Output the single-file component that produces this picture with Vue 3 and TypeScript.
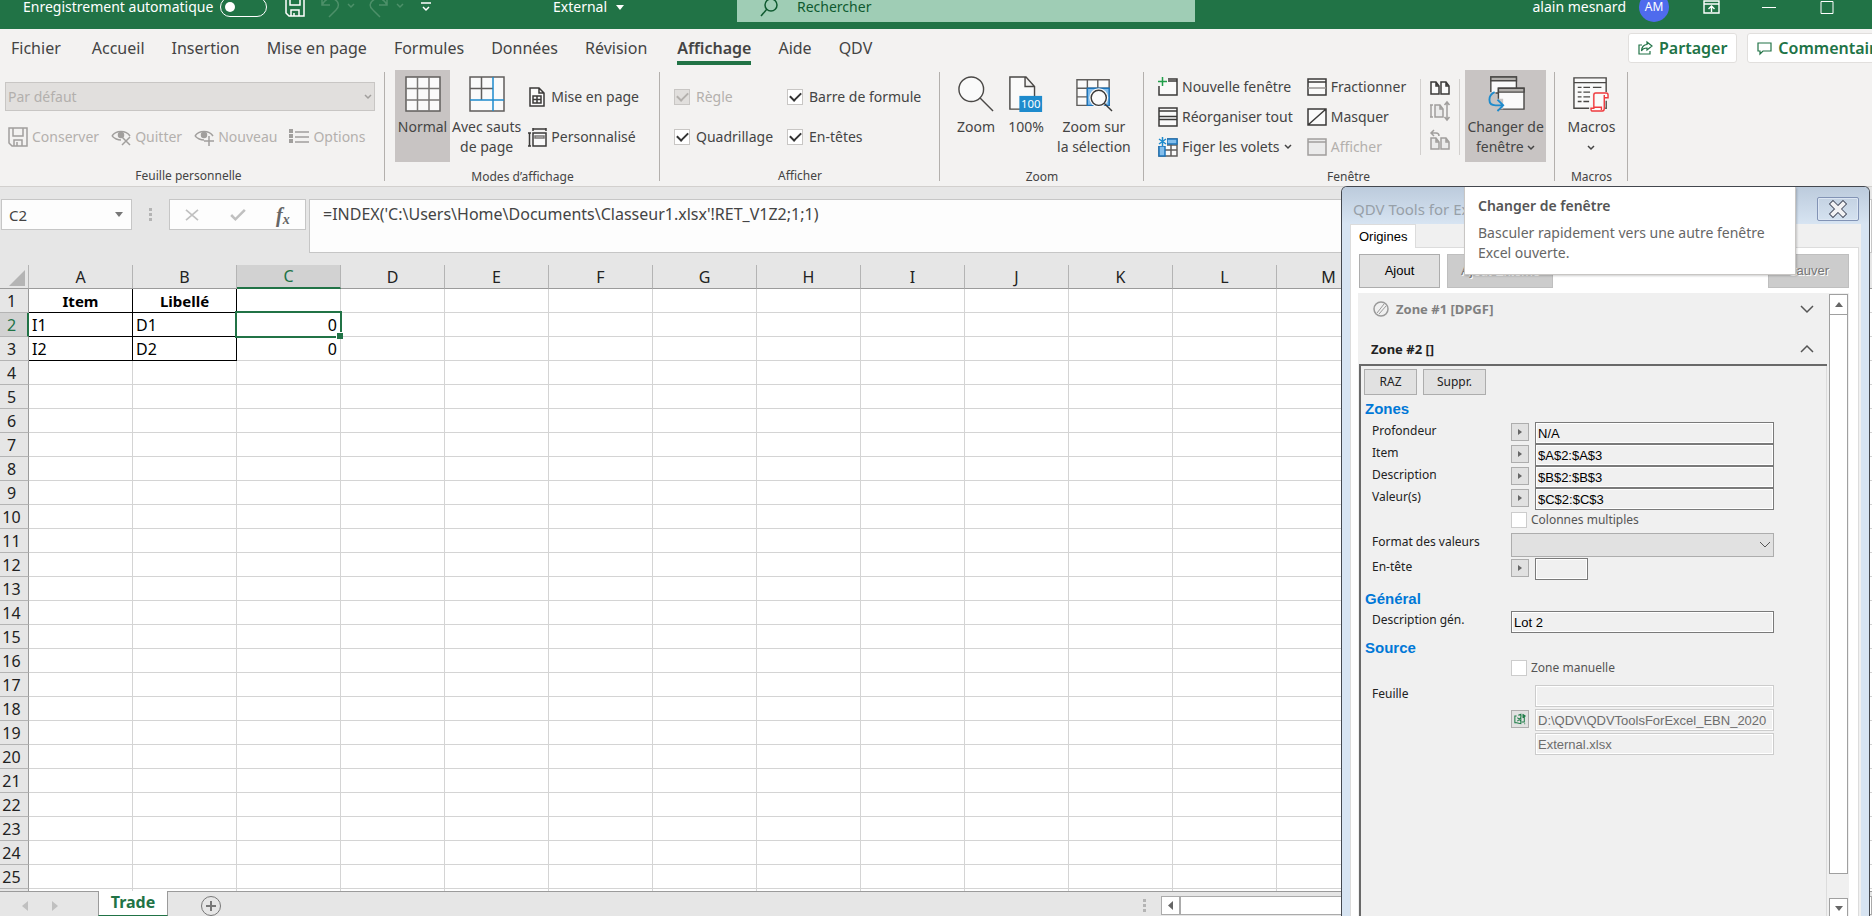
<script setup lang="ts">
import { ref } from 'vue'

const tabs = ['Fichier', 'Accueil', 'Insertion', 'Mise en page', 'Formules', 'Données', 'Révision', 'Affichage', 'Aide', 'QDV']
const activeTab = ref('Affichage')

const columns = Array.from({ length: 18 }, (_, i) => String.fromCharCode(65 + i))
const rows = Array.from({ length: 26 }, (_, i) => i + 1)
const cells: Record<string, string> = {
  A1: 'Item', B1: 'Libellé',
  A2: 'I1', B2: 'D1', C2: '0',
  A3: 'I2', B3: 'D2', C3: '0',
}

function cellClass(col: string, row: number) {
  const boxed = row <= 3 && (col === 'A' || col === 'B')
  return {
    boxed,
    head: row === 1,
    num: col === 'C',
    selected: col === 'C' && row === 2,
  }
}

const name = ref('C2')
const formula = ref("=INDEX('C:\\Users\\Home\\Documents\\Classeur1.xlsx'!RET_V1Z2;1;1)")

const ranges = ref([
  { id: 'depth', label: 'Profondeur', value: 'N/A' },
  { id: 'item', label: 'Item', value: '$A$2:$A$3' },
  { id: 'desc', label: 'Description', value: '$B$2:$B$3' },
  { id: 'vals', label: 'Valeur(s)', value: '$C$2:$C$3' },
])
const description = ref('Lot 2')
</script>

<template>
  <div class="app">
    <header class="titlebar">
      <div class="title-left">
        <label class="autosave" for="autosave">Enregistrement automatique</label>
        <input id="autosave" class="toggle" type="checkbox" />
        <button class="tb-btn save" aria-label="Enregistrer">
          <svg width="20" height="20" viewBox="0 0 20 20" fill="none" stroke="#fff" stroke-width="1.5"><path d="M1 1h18v18H4l-3-3zM5 1v7h10V1M6 19v-6h8v6M9 16v3" /></svg>
        </button>
        <button class="tb-btn undo" aria-label="Annuler">
          <svg width="32" height="22" viewBox="0 0 32 22" fill="none" stroke="#4d9069" stroke-width="1.5"><path d="M1 1v8h8M1 9C4 3 9 1 13 3c6 3 5 8 2 11l-7 7M27 8l3 3 3-3" /></svg>
        </button>
        <button class="tb-btn redo" aria-label="Rétablir">
          <svg width="36" height="22" viewBox="0 0 36 22" fill="none" stroke="#4d9069" stroke-width="1.5"><path d="M18 1v8h-8M18 9C15 3 10 1 6 3 0 6 0 11 4 14l7 7M28 8l3 3 3-3" /></svg>
        </button>
        <button class="tb-btn custom" aria-label="Personnaliser la barre">
          <svg width="10" height="10" viewBox="0 0 10 10" fill="none" stroke="#fff" stroke-width="1.5"><path d="M0 1h10M2 5l3 3 3-3" /></svg>
        </button>
        <button class="tb-btn doc">External <svg width="8" height="5" viewBox="0 0 8 5"><path d="M0 0h8L4 5z" fill="#fff" /></svg></button>
      </div>
      <div class="search">
        <svg width="18" height="18" viewBox="0 0 18 18" fill="none" stroke="#0f5a30" stroke-width="1.5"><circle cx="11" cy="7" r="6" /><path d="M7 11l-6 7" /></svg>
        <input type="text" placeholder="Rechercher" aria-label="Rechercher" />
      </div>
      <div class="title-right">
        <span>alain mesnard</span>
        <span class="avatar">AM</span>
        <button class="tb-btn" aria-label="Options du ruban">
          <svg width="17" height="14" viewBox="0 0 17 14" fill="none" stroke="#fff" stroke-width="1.4"><path d="M1 1h15v12H1zM1 4h15M8.500 12V6M5.500 9l3-3 3 3" /></svg>
        </button>
        <button class="tb-btn min" aria-label="Réduire"><svg width="14" height="14" viewBox="0 0 14 14" stroke="#fff"><path d="M0 7.500h14" /></svg></button>
        <button class="tb-btn max" aria-label="Agrandir"><svg width="14" height="14" viewBox="0 0 14 14" fill="none" stroke="#fff"><path d="M1 1.500h12v12H1z" /></svg></button>
      </div>
    </header>

    <nav class="tabs">
      <button v-for="t in tabs" :key="t" class="tab" :class="{ active: t === activeTab }" @click="activeTab = t">{{ t }}</button>
      <div class="share">
        <button class="pill">
          <svg width="15" height="14" viewBox="0 0 15 14" fill="none" stroke="#217346" stroke-width="1.2"><path d="M4 4H1v9h11v-3M9 1l5 4-5 4V7C6 7 4.500 8 3.500 10 3.500 6 6 3.500 9 3.500z" /></svg>Partager
        </button>
        <button class="pill comments">
          <svg width="15" height="13" viewBox="0 0 15 13" fill="none" stroke="#217346" stroke-width="1.2"><path d="M1 1h13v8H6l-3 3V9H1z" /></svg>Commentaires
        </button>
      </div>
    </nav>

    <section class="ribbon">
      <div class="group g-view">
        <div class="body stack">
          <div class="sv">
            <select class="sheetview" disabled aria-label="Affichage de feuille"><option>Par défaut</option></select>
            <svg width="8" height="6" viewBox="0 0 8 6" fill="none" stroke="#a19f9d" stroke-width="1.500"><path d="M1 1l3 3 3-3" /></svg>
          </div>
          <div class="view-actions">
            <button class="rb" disabled>
              <svg width="20" height="20" viewBox="0 0 20 20" fill="none" stroke="#a19f9d" stroke-width="1.5"><path d="M1 1h18v18H4l-3-3zM5 1v8h10V1M6 19v-6h8v6M9 15v4" /></svg>Conserver
            </button>
            <button class="rb" disabled>
              <svg width="20" height="18" viewBox="0 0 20 18" fill="none" stroke="#a19f9d" stroke-width="1.5"><path d="M1 8c4-6 14-6 18 0M1 8c2 2 5 4 9 4M11 9l8 8M19 9l-8 8" /><circle cx="10" cy="7" r="2.500" fill="#a19f9d" /></svg>Quitter
            </button>
            <button class="rb" disabled>
              <svg width="20" height="18" viewBox="0 0 20 18" fill="none" stroke="#a19f9d" stroke-width="1.5"><path d="M1 8c4-6 14-6 18 0M1 8c2 2 5 4 9 4M15 8v10M10 13h10" /><circle cx="10" cy="7" r="2.500" fill="#a19f9d" /></svg>Nouveau
            </button>
            <button class="rb" disabled>
              <svg width="20" height="16" viewBox="0 0 20 16" fill="none" stroke="#a19f9d" stroke-width="1.5"><path d="M6 3h14M6 8h14M6 13h14" /><path d="M0 2h4M0 7h4M0 12h4" stroke-width="4" /></svg>Options
            </button>
          </div>
        </div>
        <div class="caption">Feuille personnelle</div>
      </div>

      <div class="group g-modes">
        <div class="body">
          <button class="big pressed">
            <svg width="36" height="36" viewBox="0 0 36 36" fill="#fafafa" stroke="#605e5c" stroke-width="1.5"><path d="M1 1h34v34H1z" /><path d="M12.500 1v34M24 1v34M1 12.500h34M1 24h34" stroke="#797775" /></svg>
            <span>Normal</span>
          </button>
          <button class="big">
            <svg width="36" height="36" viewBox="0 0 36 36" fill="#fafafa" stroke="#605e5c" stroke-width="1.5"><path d="M1 1h34v34H1z" /><path d="M12.500 1v23M1 12.500h23" /><path d="M24 1v34M1 24h34" stroke="#1e8bcd" /></svg>
            <span>Avec sauts<br />de page</span>
          </button>
          <div class="stack two">
            <button class="rb">
              <svg width="20" height="20" viewBox="0 0 20 20" fill="#fafafa" stroke="#3b3a39" stroke-width="1.5"><path d="M3 1h9l5 5v13H3zM12 1v5h5" /><path d="M6 9h8v7H6zM10 9v7M6 12.500h8" /></svg>Mise en page
            </button>
            <button class="rb">
              <svg width="20" height="20" viewBox="0 0 20 20" fill="#fafafa" stroke="#3b3a39" stroke-width="1.500"><path d="M6 6h13v13H6zM6 1v3M19 1v3M6 2h13M1 6h3M1 19h3M2.500 6v13" /><path d="M8 9h9v2H8z" stroke="#797775" /></svg>Personnalisé
            </button>
          </div>
        </div>
        <div class="caption">Modes d’affichage</div>
      </div>

      <div class="group g-show">
        <div class="body checks">
          <label class="chk off"><input type="checkbox" checked disabled />Règle</label>
          <label class="chk"><input type="checkbox" checked />Barre de formule</label>
          <label class="chk"><input type="checkbox" checked />Quadrillage</label>
          <label class="chk"><input type="checkbox" checked />En-têtes</label>
        </div>
        <div class="caption">Afficher</div>
      </div>

      <div class="group g-zoom">
        <div class="body">
          <button class="big">
            <svg width="38" height="38" viewBox="0 0 38 38" fill="#fafafa" stroke="#4a4846" stroke-width="1.5"><circle cx="14" cy="14" r="13" /><path d="M23 23l14 14" /></svg>
            <span>Zoom</span>
          </button>
          <button class="big">
            <svg width="36" height="38" viewBox="0 0 36 38" fill="#fafafa" stroke="#4a4846" stroke-width="1.5"><path d="M1 1h17l9 10v24H1zM17 1v10h10" /><path d="M11 21h24v17H11z" fill="#1e8bcd" stroke="none" /><text x="23" y="34" text-anchor="middle" font-size="12" fill="#fff" stroke="none">100</text></svg>
            <span>100%</span>
          </button>
          <button class="big">
            <svg width="38" height="38" viewBox="0 0 38 38" fill="#fafafa" stroke="#605e5c" stroke-width="1.500"><path d="M1 4h34v27H1zM12 4v27M23 4v9M1 13h34M1 22h11" /><path d="M12 13h23v18H12z" fill="#83beec" stroke="#1e75bb" /><circle cx="24" cy="23" r="10" stroke="none" /><circle cx="24" cy="23" r="8" stroke="#3b3a39" /><path d="M30 29l8 8" stroke="#3b3a39" /></svg>
            <span>Zoom sur<br />la sélection</span>
          </button>
        </div>
        <div class="caption">Zoom</div>
      </div>

      <div class="group g-window">
        <div class="body">
          <div class="stack three">
            <button class="rb">
              <svg width="20" height="20" viewBox="0 0 20 20" fill="#fafafa" stroke="#3b3a39" stroke-width="1.500"><path d="M10 2h9v16H1V9M10 4h9" /><path d="M4.500 0v9M0 4.500h9" stroke="#21a04b" /></svg>Nouvelle fenêtre
            </button>
            <button class="rb">
              <svg width="20" height="20" viewBox="0 0 20 20" fill="#fafafa" stroke="#3b3a39" stroke-width="1.500"><path d="M1 1h18v18H1zM1 4h18M1 9.500h18M1 12.500h18" /></svg>Réorganiser tout
            </button>
            <button class="rb">
              <svg width="20" height="20" viewBox="0 0 20 20" fill="#fafafa" stroke="#605e5c" stroke-width="1.500"><path d="M1 2h18v17H1zM1 13h18M13 2v17M8 8h11" /><path d="M9 2h10v5H9zM1 9h6v10H1z" fill="#83beec" stroke="#1e75bb" /><path d="M0 0h9v9H0z" fill="#f3f2f1" stroke="none" /><path d="M4.500 0v9M1 2l7 5M8 2L1 7" stroke="#1e8bcd" /></svg>Figer les volets
              <svg class="chev" width="8" height="6" viewBox="0 0 8 6"><path d="M1 1l3 3 3-3" /></svg>
            </button>
          </div>
          <div class="stack three">
            <button class="rb">
              <svg width="20" height="20" viewBox="0 0 20 20" fill="#fafafa" stroke="#3b3a39" stroke-width="1.500"><path d="M1 2h18v16H1zM1 5h18" /><path d="M1 11h18" stroke="#979593" /></svg>Fractionner
            </button>
            <button class="rb">
              <svg width="20" height="20" viewBox="0 0 20 20" fill="#fafafa" stroke="#3b3a39" stroke-width="1.500"><path d="M1 2h18v16H1zM1 18L19 2" /></svg>Masquer
            </button>
            <button class="rb" disabled>
              <svg width="20" height="20" viewBox="0 0 20 20" fill="#ebebeb" stroke="#a19f9d" stroke-width="1.500"><path d="M1 2h18v16H1zM1 5h18" /></svg>Afficher
            </button>
          </div>
          <div class="stack compare">
            <button class="rb" aria-label="Afficher côte à côte">
              <svg width="20" height="20" viewBox="0 0 20 20" fill="#fafafa" stroke="#3b3a39" stroke-width="1.500"><path d="M1 4h5l3 4v8H1zM11 4h5l3 4v8h-8zM6 4v4h3M16 4v4h3" /></svg>
            </button>
            <button class="rb" disabled aria-label="Défilement synchrone">
              <svg width="20" height="20" viewBox="0 0 20 20" fill="#ebebeb" stroke="#a19f9d" stroke-width="1.500"><path d="M5 4h5l3 4v8H5zM10 4v4h3M1 4v12M0 4h3M0 16h3M17 1v18M14.500 4L17 1l2.500 3M14.500 16l2.500 3 2.500-3" /></svg>
            </button>
            <button class="rb" disabled aria-label="Rétablir la position">
              <svg width="20" height="20" viewBox="0 0 20 20" fill="#ebebeb" stroke="#a19f9d" stroke-width="1.500"><path d="M1 8h5l3 4v7H1zM11 8h5l3 4v7h-8zM6 8v4h3M16 8v4h3" /><path d="M4 0L1 3l3 3M1 3h5c2 0 3 1 3 3" fill="none" /></svg>
            </button>
          </div>
          <button class="big pressed switch">
            <svg width="40" height="38" viewBox="0 0 40 38" fill="#fafafa" stroke="#4a4846" stroke-width="1.500"><path d="M4 1h27v17H4z" /><path d="M4 1h27v4H4z" fill="#b3b0ad" /><path d="M12 13h27v22H12z" /><path d="M12 13h27v4H12z" fill="#b3b0ad" /><path d="M2 17h7v18H2zM8 24h9v11H8z" fill="#c8c4c3" stroke="none" /><path d="M8 17C1 20 0 31 9 31h8M11 25l6 6-6 6" fill="none" stroke="#1e8bcd" stroke-width="2" /></svg>
            <span>Changer de<br />fenêtre <svg class="chev" width="8" height="6" viewBox="0 0 8 6"><path d="M1 1l3 3 3-3" /></svg></span>
          </button>
        </div>
        <div class="caption">Fenêtre</div>
      </div>

      <div class="group g-macros">
        <div class="body">
          <button class="big">
            <svg width="38" height="38" viewBox="0 0 38 38" fill="#fafafa" stroke="#4a4846" stroke-width="1.500"><path d="M1 2h34v32H1zM1 7h34" /><path d="M5 12h4M11 12h7M21 12h9M5 17h4M11 17h7M5 22h4M11 22h7M5 27h4M11 27h6" /><path d="M22 19h14v5h-4v13H19v-4h3z" stroke="#f3f2f1" stroke-width="4" /><path d="M24 18h11q2 0 2 2v3h-4v11q0 3-2 3H20q-1 0-1-3h3V20q0-2 2-2zM22 33h8v3M33 23v-3" stroke="#f03a3e" /></svg>
            <span>Macros<br /><svg class="chev" width="8" height="6" viewBox="0 0 8 6"><path d="M1 1l3 3 3-3" /></svg></span>
          </button>
        </div>
        <div class="caption">Macros</div>
      </div>
    </section>

    <section class="formula-bar">
      <div class="name-box">
        <input v-model="name" type="text" aria-label="Zone Nom" />
        <svg width="8" height="5" viewBox="0 0 8 5"><path d="M0 0h8L4 5z" fill="#777" /></svg>
      </div>
      <div class="grip"><i /><i /><i /></div>
      <div class="fx">
        <button aria-label="Annuler la saisie"><svg width="14" height="12" viewBox="0 0 16 14" fill="none" stroke="#c0c0c0" stroke-width="2"><path d="M1 1l14 12M15 1L1 13" /></svg></button>
        <button aria-label="Valider"><svg width="16" height="12" viewBox="0 0 18 14" fill="none" stroke="#c0c0c0" stroke-width="3"><path d="M1 7l5 5L17 1" /></svg></button>
        <button class="fn" aria-label="Insérer une fonction">f<sub>x</sub></button>
      </div>
      <input v-model="formula" class="formula" type="text" aria-label="Barre de formule" />
    </section>

    <main class="sheet">
      <table>
        <colgroup><col class="c-num" /><col v-for="c in columns" :key="c" class="c-col" /></colgroup>
        <thead>
          <tr>
            <th class="corner"><svg width="16" height="16" viewBox="0 0 16 16"><path d="M16 0v16H0z" fill="#b4b4b4" /></svg></th>
            <th v-for="c in columns" :key="c" :class="{ on: c === 'C' }">{{ c }}</th>
          </tr>
        </thead>
        <tbody>
          <tr v-for="r in rows" :key="r">
            <th :class="{ on: r === 2 }">{{ r }}</th>
            <td v-for="c in columns" :key="c" :class="cellClass(c, r)">{{ cells[c + r] }}<i v-if="c === 'C' && r === 2" class="cursor" /></td>
          </tr>
        </tbody>
      </table>
    </main>

    <footer class="sheet-tabs">
      <button class="nav" aria-label="Précédent"><svg width="6" height="10" viewBox="0 0 6 10"><path d="M6 0v10L0 5z" fill="#c0c0c0" /></svg></button>
      <button class="nav next" aria-label="Suivant"><svg width="6" height="10" viewBox="0 0 6 10"><path d="M0 0v10l6-5z" fill="#c0c0c0" /></svg></button>
      <button class="sheet-tab">Trade</button>
      <button class="nav add" aria-label="Nouvelle feuille"><svg width="20" height="20" viewBox="0 0 20 20" fill="none" stroke="#777"><circle cx="10" cy="10" r="9.500" /><path d="M10 5v10M5 10h10" stroke-width="2" /></svg></button>
      <div class="grip"><i /><i /><i /></div>
      <div class="hscroll">
        <button aria-label="Défiler à gauche"><svg width="5" height="9" viewBox="0 0 5 9"><path d="M5 0v9L0 4.500z" fill="#666" /></svg></button>
      </div>
    </footer>

    <aside class="dialog">
      <div class="dlg-title">
        <span>QDV Tools for Excel</span>
        <button aria-label="Fermer"><svg width="18" height="16" viewBox="0 0 18 16" fill="none"><path d="M4 3l10 10M14 3L4 13" stroke="#4b5162" stroke-width="6" stroke-linecap="square" /><path d="M4 3l10 10M14 3L4 13" stroke="#f2f2f4" stroke-width="4" stroke-linecap="square" /></svg></button>
      </div>
      <div class="dlg-body">
        <div class="dlg-tabs"><button>Origines</button></div>
        <div class="page">
          <div class="actions">
            <button class="wbtn">Ajout</button>
            <button class="wbtn wide" disabled>Ajout Externe</button>
            <button class="wbtn last" disabled>Sauver</button>
          </div>
          <div class="list">
            <div class="zones">
              <button class="zone off">
                <svg width="16" height="16" viewBox="0 0 16 16" fill="none" stroke="#9a9a9a" stroke-width="1.500"><circle cx="8" cy="8" r="7" /><path d="M4 12l7-9M6 13l7-8" stroke-width="1" /></svg>
                Zone #1 [DPGF]
                <svg class="arrow" width="14" height="8" viewBox="0 0 14 8" fill="none" stroke="#555" stroke-width="1.500"><path d="M1 1l6 6 6-6" /></svg>
              </button>
              <button class="zone">
                Zone #2 []
                <svg class="arrow" width="14" height="8" viewBox="0 0 14 8" fill="none" stroke="#555" stroke-width="1.500"><path d="M1 7l6-6 6 6" /></svg>
              </button>
              <div class="detail">
                <div class="tools"><button class="sbtn">RAZ</button><button class="sbtn wide">Suppr.</button></div>
                <h3>Zones</h3>
                <div v-for="f in ranges" :key="f.id" class="row">
                  <label :for="f.id">{{ f.label }}</label>
                  <button class="pick" :aria-label="'Choisir ' + f.label"><svg width="4" height="6" viewBox="0 0 4 6"><path d="M0 0v6l4-3z" fill="#666" /></svg></button>
                  <input :id="f.id" v-model="f.value" type="text" />
                </div>
                <label class="tick"><input type="checkbox" />Colonnes multiples</label>
                <div class="row format">
                  <label for="fmt">Format des valeurs</label>
                  <div class="combo">
                    <select id="fmt"><option></option></select>
                    <svg width="10" height="6" viewBox="0 0 10 6" fill="none" stroke="#555"><path d="M0 0l5 5 5-5" /></svg>
                  </div>
                </div>
                <div class="row">
                  <label for="header">En-tête</label>
                  <button class="pick" aria-label="Choisir En-tête"><svg width="4" height="6" viewBox="0 0 4 6"><path d="M0 0v6l4-3z" fill="#666" /></svg></button>
                  <input id="header" class="short" type="text" />
                </div>
                <h3 class="spaced">Général</h3>
                <div class="row">
                  <label for="gen">Description gén.</label>
                  <input id="gen" v-model="description" class="span" type="text" />
                </div>
                <h3 class="tight">Source</h3>
                <label class="tick"><input type="checkbox" />Zone manuelle</label>
                <div class="source">
                  <div class="row">
                    <label for="leaf">Feuille</label>
                    <input id="leaf" class="c3" type="text" disabled />
                  </div>
                  <div class="row">
                    <button class="pick c2" aria-label="Ouvrir le classeur"><svg width="12" height="12" viewBox="0 0 14 13" fill="none" stroke="#1b7b45" stroke-width="1.200"><path d="M3 3H1v8h2l5 1V1L5 2M4 5l4 4M8 5L4 9M9 3h3v7h-3M10 1l3 2-3 2M12 12h1" /></svg></button>
                    <input class="c3" type="text" value="D:\QDV\QDVToolsForExcel_EBN_2020" disabled aria-label="Dossier" />
                  </div>
                  <div class="row">
                    <input class="c3" type="text" value="External.xlsx" disabled aria-label="Fichier" />
                  </div>
                </div>
              </div>
            </div>
            <div class="vscroll">
              <button aria-label="Monter"><svg width="8" height="5" viewBox="0 0 8 5"><path d="M4 0l4 5H0z" fill="#666" /></svg></button>
              <div class="thumb" />
              <button class="down" aria-label="Descendre"><svg width="8" height="5" viewBox="0 0 8 5"><path d="M0 0h8L4 5z" fill="#666" /></svg></button>
            </div>
          </div>
        </div>
      </div>
    </aside>

    <div class="tooltip" role="tooltip">
      <strong>Changer de fenêtre</strong>
      <p>Basculer rapidement vers une autre fenêtre Excel ouverte.</p>
    </div>
  </div>
</template>

<style>
body { margin: 0; overflow: hidden; }
</style>

<style scoped>
.app {
  position: relative;
  display: flex;
  flex-direction: column;
  height: 100vh;
  overflow: hidden;
  background: #e6e6e6;
  color: #444;
  font: 14px/20px "Noto Sans", "Open Sans", sans-serif;
}
* { box-sizing: border-box; }
button, input, select { font: inherit; color: inherit; margin: 0; padding: 0; border: 0; background: none; border-radius: 0; }
button { white-space: nowrap; }
svg { flex: none; display: block; overflow: visible; }

/* Title bar */
.titlebar { flex: none; display: flex; align-items: center; height: 44px; margin-top: -15px; background: #217346; color: #fff; }
.title-left { flex: 0 0 737px; display: flex; align-items: center; padding-left: 23px; }
.autosave { width: 197px; white-space: nowrap; }
.toggle { appearance: none; width: 47px; height: 20px; border: 1px solid #fff; border-radius: 10px; display: flex; align-items: center; padding-left: 4px; }
.toggle::before { content: ""; width: 10px; height: 10px; border-radius: 50%; background: #fff; }
.tb-btn { display: flex; align-items: center; }
.save { margin-left: 18px; }
.undo { margin-left: 16px; }
.redo { margin-left: 16px; }
.custom { margin-left: 16px; }
.doc { gap: 9px; margin-left: 122px; }
.search { flex: 0 1 458px; display: flex; align-items: center; gap: 19px; height: 30px; padding-left: 23px; background: #9fcdb5; color: #0f5a30; }
.search input { flex: 1; min-width: 0; outline: 0; }
.search input::placeholder { color: #0f5a30; opacity: 1; }
.title-right { margin-left: auto; display: flex; align-items: center; padding-right: 38px; }
.avatar { display: grid; place-items: center; width: 30px; height: 30px; margin: 0 34px 0 13px; border-radius: 50%; background: #4f6bed; font-size: 12px; }
.min { margin-left: 42px; }
.max { margin-left: 44px; }

/* Ribbon tabs */
.tabs { flex: none; display: flex; align-items: flex-start; gap: 27px; height: 39px; padding-left: 11px; background: #f3f2f1; font-size: 16px; }
.tab { height: 36px; padding-top: 6px; border-bottom: 4px solid transparent; }
.tab:first-child { margin-right: 4px; }
.tab.active { margin-left: 3px; border-color: #217346; font-weight: 600; }
.share { display: flex; gap: 10px; width: 244px; margin: 4px 0 0 auto; overflow: hidden; }
.pill { flex: none; display: flex; align-items: center; gap: 6px; height: 30px; padding: 0 9px; border: 1px solid #e1dfdd; border-radius: 3px; background: #fff; color: #217346; font-weight: 600; }

/* Ribbon groups */
.ribbon { flex: none; display: flex; height: 119px; padding-top: 2px; background: #f3f2f1; border-bottom: 1px solid #d2d0ce; }
.group { flex: none; display: flex; flex-direction: column; position: relative; }
.group::after { content: ""; position: absolute; right: 0; top: 2px; height: 109px; width: 1px; background: #b3b0ad; }
.body { display: flex; height: 92px; }
.caption { padding-top: 5px; text-align: center; font-size: 12px; }
.stack { display: flex; flex-direction: column; }
.rb { display: flex; align-items: center; gap: 4px; height: 30px; }
.rb:disabled, .off { color: #b3b0ad; }
.big { display: flex; flex-direction: column; align-items: center; gap: 5px; padding-top: 6px; height: 92px; }
.big svg:first-child { height: 36px; }
.big.pressed { background: #c8c4c3; }
.chev { display: inline-block; fill: none; stroke: #444; stroke-width: 1.5; vertical-align: middle; }

.g-view { width: 385px; }
.g-view .body { padding: 12px 10px 0 5px; }
.g-view .caption { padding-right: 8px; }
.sv { display: grid; align-items: center; }
.sv > * { grid-area: 1 / 1; }
.sv svg { justify-self: end; margin-right: 3px; }
.sheetview { appearance: none; height: 29px; padding: 0 2px; border: 1px solid #c8c6c4; background: #e1dfdd; color: #b3b0ad; opacity: 1; }
.view-actions { display: flex; gap: 12px; padding: 11px 3px 0; }

.g-modes { width: 275px; }
.g-modes .body { padding-left: 10px; }
.g-modes .pressed { width: 55px; margin-right: 2px; }
.two { gap: 10px; padding: 12px 0 0 6px; }

.g-show { width: 280px; }
.checks { display: grid; grid-template-columns: 113px auto; grid-auto-rows: 20px; row-gap: 20px; padding: 17px 0 0 14px; }
.chk { display: flex; align-items: center; gap: 6px; white-space: nowrap; }
.chk input { appearance: none; display: grid; place-items: center; width: 16px; height: 16px; border: 1px solid #c8c6c4; background: #fff; }
.chk input:checked::before { content: ""; width: 9px; height: 5px; margin-top: -3px; border: solid #333; border-width: 0 0 2px 2px; transform: rotate(-45deg); }
.chk.off input { background: #e1dfdd; }
.chk.off input:checked::before { border-color: #b3b0ad; }

.g-zoom { width: 204px; }
.g-zoom .body { padding-left: 17px; gap: 13px; }

.g-window { width: 411px; }
.g-window .body { padding-left: 14px; }
.three { padding-top: 2px; margin-right: 14px; }
.compare { width: 40px; height: 76px; margin: 9px 5px 0 0; padding-left: 9px; border: solid #d2d0ce; border-width: 0 1px; }
.compare .rb:first-child { height: 17px; }
.switch { width: 81px; }
.g-window .caption { padding-right: 2px; }
.g-macros { width: 73px; }
.g-macros .body { justify-content: center; }

/* Formula bar */
.formula-bar { flex: none; display: flex; align-items: flex-start; height: 78px; padding: 12px 0 0 1px; font-size: 15px; }
.name-box, .fx { display: flex; align-items: center; height: 31px; border: 1px solid #c6c6c6; background: #fdfdfd; }
.name-box { width: 131px; padding: 0 8px 0 7px; }
.name-box input { flex: 1; min-width: 0; }
.grip { display: flex; flex-direction: column; gap: 2px; }
.grip i { width: 3px; height: 3px; background: #b4b4b4; }
.formula-bar .grip { margin: 9px 17px 0; }
.fx { width: 137px; justify-content: space-around; }
.fn { color: #666; font: italic bold 20px/26px "Liberation Serif", serif; }
.fn sub { font-size: 14px; vertical-align: -2px; line-height: 0; }
.formula { flex: 1; height: 54px; margin-left: 3px; padding: 0 13px 24px; border: 1px solid #c6c6c6; background: #fdfdfd; font-size: 16px; }

/* Grid */
.sheet { flex: 1; min-height: 0; overflow: hidden; background: #fff; }
table { table-layout: fixed; width: 1901px; border-collapse: separate; border-spacing: 0; color: #000; font-size: 16px; }
.c-num { width: 29px; }
.c-col { width: 104px; }
th, td { height: 24px; padding: 0 3px; border: solid #d4d4d4; border-width: 0 1px 1px 0; line-height: 20px; }
th { padding: 0; background: #e6e6e6; border-color: #b4b4b4; color: #222; font-weight: 400; text-align: center; }
thead th { border-bottom-color: #9b9b9b; }
tbody th { border-right-color: #9b9b9b; padding-right: 5px; }
.corner svg { margin: 2px 3px 0 9px; }
th.on { background: #d2d2d2; color: #217346; }
thead th.on { border-bottom: 2px solid #217346; }
tbody th.on { border-right: 2px solid #217346; padding-right: 4px; }
td.boxed { border-color: #000; }
td.boxed.head { font-size: 15px; font-weight: 700; text-align: center; }
td.num { text-align: right; }
td.selected { position: relative; }
.cursor { position: absolute; inset: -2px; border: 2px solid #217346; }
.cursor::after { content: ""; position: absolute; right: -3px; bottom: -3px; width: 6px; height: 6px; border: solid #fff; border-width: 1px 0 0 1px; background: #217346; }

/* Sheet tabs */
.sheet-tabs { flex: none; display: flex; height: 25px; border-top: 1px solid #9b9b9b; background: #e6e6e6; }
.nav { display: flex; align-items: center; padding: 4px 0 0 22px; }
.nav.next { padding-left: 24px; }
.sheet-tab { width: 70px; height: 25px; margin: -1px 0 0 40px; padding-bottom: 3px; border: solid #9b9b9b; border-width: 0 1px; border-bottom: 1px solid #217346; background: #fff; color: #217346; font-size: 16px; font-weight: 700; }
.nav.add { padding-left: 33px; }
.sheet-tabs .grip { margin: 7px 15px 0 auto; }
.hscroll { flex: 0 0 711px; height: 19px; margin-top: 4px; border: 1px solid #ababab; background: #fff; }
.hscroll button { display: grid; place-items: center; width: 19px; height: 17px; border-right: 2px solid #ababab; }

/* Docked dialog */
.dialog { position: absolute; top: 186px; right: 2px; bottom: 0; width: 529px; display: flex; flex-direction: column; border: 1px solid #44484f; border-bottom: 0; border-radius: 6px 6px 0 0; background: #d7e4f2; font: 12px/18px "Noto Sans", sans-serif; color: #222; overflow: hidden; }
.dlg-title { flex: none; display: flex; align-items: center; height: 37px; padding: 7px 10px 0 11px; background: linear-gradient(#bccbdc, #d7e4f2); color: #97a0a8; font-size: 15px; }
.dlg-title button { display: grid; place-items: center; width: 42px; height: 24px; margin-left: auto; border: 1px solid #8293b5; border-radius: 2px; box-shadow: inset 0 0 0 1px #dce6f3; }
.dlg-body { flex: 1; min-height: 0; display: flex; flex-direction: column; margin: 0 8px; background: #f0f0f0; }
.dlg-tabs { flex: none; height: 23px; }
.dlg-tabs button { position: relative; z-index: 1; height: 24px; padding: 0 8px; border: 1px solid #dcdcdc; border-bottom: 0; background: #fff; color: #000; font: 13px/20px "Liberation Sans", Arial, sans-serif; }
.page { flex: 1; min-height: 0; display: flex; flex-direction: column; margin-right: 2px; padding: 6px 9px 0 7px; border: 1px solid #dcdcdc; border-bottom: 0; background: #fff; }
.actions { flex: none; display: flex; gap: 7px; height: 39px; padding-left: 1px; }
.wbtn { width: 81px; height: 34px; border: 1px solid #adadad; background: #e1e1e1; color: #000; font: 13px/20px "Liberation Sans", Arial, sans-serif; }
.wbtn.wide { width: 106px; }
.wbtn.last { margin-left: auto; }
.wbtn:disabled { border-color: #bfbfbf; background: #ccc; color: #777; text-shadow: 1px 1px #fff; }
.list { flex: 1; min-height: 0; display: flex; background: #f0f0f0; }
.zones { flex: 1; display: flex; flex-direction: column; }
.zone { flex: none; display: flex; align-items: center; gap: 7px; height: 32px; padding: 0 15px; color: #222; font-size: 13px; font-weight: 700; }
.zone + .zone { padding: 0 15px 0 13px; margin-top: 8px; height: 31px; }
.zone.off { color: #808080; }
.arrow { margin-left: auto; }
.detail { flex: 1; margin: 0 2px 0 1px; padding: 3px 0 0 3px; border: solid #696969; border-width: 2px 0 0 2px; box-shadow: inset -1px 0 #dcdcdc; }
.tools { display: flex; gap: 6px; height: 30px; }
.sbtn { width: 53px; height: 26px; border: 1px solid #adadad; background: #e1e1e1; }
.sbtn.wide { width: 63px; }
h3 { margin: 0 0 3px 1px; color: #0078d7; font: bold 15px/20px "Liberation Sans", Arial, sans-serif; }
h3.spaced { margin: 9px 0 2px 1px; }
h3.tight { margin: 5px 0 0 1px; }
.row { display: grid; grid-template-columns: 139px 24px 239px; align-items: start; padding-left: 8px; height: 22px; }
.row label { grid-column: 1; white-space: nowrap; }
.row input { width: 239px; height: 22px; padding: 0 2px; border: 1px solid #7a7a7a; box-shadow: inset 0 0 0 1px #fff; background: #f0f0f0; color: #000; font: 13px/20px "Liberation Sans", Arial, sans-serif; }
.row input:disabled { border-color: #ccc; color: #6d6d6d; }
.row input.short { width: 53px; }
.row .span { grid-column: 2 / 4; width: 263px; }
.row .c3 { grid-column: 3; }
.row .c2 { grid-column: 2; }
.pick { display: grid; place-items: center; width: 18px; height: 18px; margin-top: 1px; border: 1px solid #adadad; background: #e1e1e1; }
.tick { display: flex; align-items: center; gap: 4px; height: 20px; padding-left: 147px; color: #555; }
.tick input { appearance: none; width: 16px; height: 16px; border: 1px solid #ccc; background: #fff; }
.format { height: 28px; padding-top: 3px; }
.combo { grid-column: 2 / 4; display: grid; align-items: center; }
.combo select { appearance: none; grid-area: 1 / 1; width: 100%; height: 24px; border: 1px solid #adadad; background: #e1e1e1; }
.combo svg { grid-area: 1 / 1; justify-self: end; margin-right: 4px; }
.source { display: flex; flex-direction: column; gap: 2px; margin-top: 7px; }
.vscroll { display: flex; flex-direction: column; width: 20px; padding: 1px 1px 0 0; }
.vscroll button { flex: none; display: grid; place-items: center; height: 21px; border: 1px solid #a0a0a0; background: #fff; }
.vscroll .down { margin-bottom: -3px; }
.thumb { flex: 1; margin-bottom: 24px; border: 1px solid #a0a0a0; border-top: 0; background: #fff; }

/* Tooltip */
.tooltip { position: absolute; top: 187px; right: 76px; width: 332px; height: 88px; padding: 9px 13px; border: 1px solid #c8c6c4; border-top: 0; background: #fff; box-shadow: 1px 1px 2px rgba(0, 0, 0, 0.2); color: #666; }
.tooltip strong { color: #555; font-weight: 600; }
.tooltip p { margin: 7px 0 0; }
</style>
